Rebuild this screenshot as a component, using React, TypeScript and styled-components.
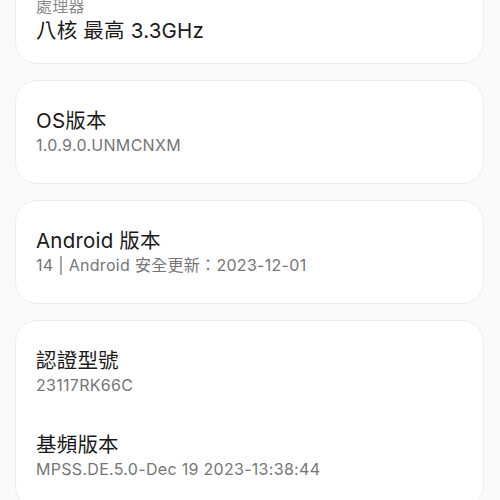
import styled, { createGlobalStyle } from "styled-components";

const GlobalStyle = createGlobalStyle`
  html, body {
    margin: 0;
    padding: 0;
    background: #fafafa;
    overflow: hidden;
  }
  body {
    font-family: Inter, "Noto Sans CJK TC", sans-serif;
    -webkit-font-smoothing: antialiased;
  }
`;

type Spec = { name: string; value: string };

const topSpec: Spec = { name: "處理器", value: "八核 最高 3.3GHz" };

const cards: Spec[][] = [
  [{ name: "OS版本", value: "1.0.9.0.UNMCNXM" }],
  [{ name: "Android 版本", value: "14 | Android 安全更新：2023-12-01" }],
  [
    { name: "認證型號", value: "23117RK66C" },
    { name: "基頻版本", value: "MPSS.DE.5.0-Dec 19 2023-13:38:44" },
  ],
];

const App = () => {
  return (
    <>
      <GlobalStyle />
      <Page>
        <Card $first>
          <Label>{topSpec.name}</Label>
          <Title>{topSpec.value}</Title>
        </Card>
        {cards.map((items, i) => (
          <Card key={i}>
            {items.map((item) => (
              <Item key={item.name}>
                <Title>{item.name}</Title>
                <Value>{item.value}</Value>
              </Item>
            ))}
          </Card>
        ))}
      </Page>
    </>
  );
};

const Page = styled.div`
  display: flex;
  flex-direction: column;
  row-gap: 16px;
  padding: 0 16px 16px 15px;
  margin-top: -40px;
`;

const Card = styled.div<{ $first?: boolean }>`
  display: flex;
  flex-direction: column;
  row-gap: ${(p) => (p.$first ? "0" : "35px")};
  background: #ffffff;
  border: 1px solid #ececec;
  border-radius: 22px;
  padding: ${(p) => (p.$first ? "34px 20px 19px" : "26px 20px 27px")};
`;

const Item = styled.div`
  display: flex;
  flex-direction: column;
`;

const Title = styled.div`
  font-size: 20.5px;
  line-height: 27px;
  letter-spacing: 0.2px;
  color: #1a1a1a;
`;

const Value = styled.div`
  font-size: 16px;
  line-height: 22px;
  letter-spacing: 0.3px;
  color: #767676;
`;

const Label = styled(Value)`
  color: #8a8a8a;
`;

export default App;
